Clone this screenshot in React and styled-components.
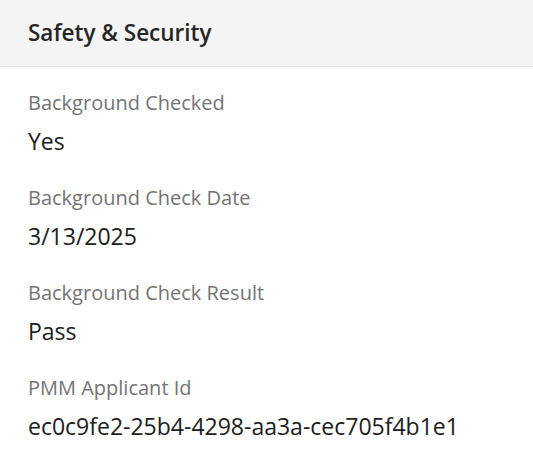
import React from "react";
import styled, { createGlobalStyle } from "styled-components";

const Global = createGlobalStyle`
  html, body { margin: 0; padding: 0; background: #ffffff; }
  body { font-family: "Open Sans", "Noto Sans", sans-serif; }
`;

const Panel = styled.section`
  width: 533px;
  background: #ffffff;
`;

const Header = styled.header`
  height: 67px;
  box-sizing: border-box;
  display: flex;
  align-items: center;
  padding: 0 28px;
  background: #f4f4f4;
  border-bottom: 1px solid #e8e8e8;
`;

const Title = styled.h2`
  margin: 0;
  font-size: 22.5px;
  line-height: 30px;
  font-weight: 600;
  color: #262626;
`;

const Body = styled.div`
  display: flex;
  flex-direction: column;
  gap: 28px;
  padding: 22px 28px;
`;

const Field = styled.div`
  display: flex;
  flex-direction: column;
  gap: 10px;
`;

const Label = styled.div`
  font-size: 20px;
  line-height: 27px;
  color: #747474;
`;

const Value = styled.div`
  font-size: 23px;
  line-height: 30px;
  color: #202020;
`;

const fields = [
  ["Background Checked", "Yes"],
  ["Background Check Date", "3/13/2025"],
  ["Background Check Result", "Pass"],
  ["PMM Applicant Id", "ec0c9fe2-25b4-4298-aa3a-cec705f4b1e1"],
];

export default function App() {
  return (
    <>
      <Global />
      <Panel>
        <Header>
          <Title>Safety &amp; Security</Title>
        </Header>
        <Body>
          {fields.map(([l, v]) => (
            <Field key={l}>
              <Label>{l}</Label>
              <Value>{v}</Value>
            </Field>
          ))}
        </Body>
      </Panel>
    </>
  );
}
